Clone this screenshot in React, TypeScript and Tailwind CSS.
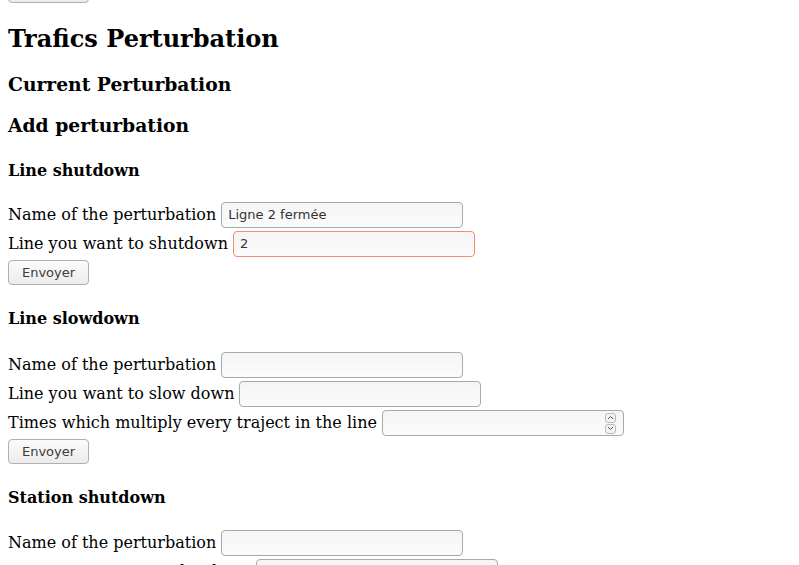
import React from "react";

const serif = { fontFamily: '"DejaVu Serif", serif' };

function Input({ value = "", focus = false, width = 242, spin = false }: { value?: string; focus?: boolean; width?: number; spin?: boolean }) {
  return (
    <div
      className={`relative h-[26px] shrink-0 rounded-[4px] border bg-gradient-to-b from-[#f5f5f5] to-[#fbfbfb] flex items-center px-[6px] text-[13px] text-[#333] ${focus ? "border-[#ef8f6f]" : "border-[#a9a9a9]"}`}
      style={{ width, fontFamily: '"DejaVu Sans", sans-serif' }}
    >
      <span>{value}</span>
      {spin && (
        <div className="absolute right-[7px] top-[2px] flex flex-col gap-[1px]">
          <div className="w-[11px] h-[10px] rounded-[3px] border border-[#bbb] bg-[#f3f3f3] flex items-center justify-center">
            <svg width="7" height="5" viewBox="0 0 7 5"><path d="M1 4 L3.5 1.5 L6 4" stroke="#555" strokeWidth="1" fill="none" /></svg>
          </div>
          <div className="w-[11px] h-[10px] rounded-[3px] border border-[#bbb] bg-[#f3f3f3] flex items-center justify-center">
            <svg width="7" height="5" viewBox="0 0 7 5"><path d="M1 1 L3.5 3.5 L6 1" stroke="#555" strokeWidth="1" fill="none" /></svg>
          </div>
        </div>
      )}
    </div>
  );
}

function Button({ className = "" }: { className?: string }) {
  return (
    <div
      className={`w-[81px] h-[25px] rounded-[4px] border border-[#b0b0b0] bg-gradient-to-b from-[#fbfbfb] to-[#ececec] flex items-center justify-center text-[13px] text-[#3c3c3c] ${className}`}
      style={{ fontFamily: '"DejaVu Sans", sans-serif' }}
    >
      Envoyer
    </div>
  );
}

function Row({ label, children }: { label: string; children: React.ReactNode }) {
  return (
    <div className="flex items-center h-[29px] gap-[5px] whitespace-nowrap">
      <span>{label}</span>
      {children}
    </div>
  );
}

export default function App() {
  return (
    <div className="w-[799px] h-[565px] overflow-hidden bg-white text-black text-[16px]" style={serif}>
      <div className="px-[8px]">
        <Button className="mt-[-22px]" />
        <h1 className="text-[24px] font-bold leading-[30px] mt-[21px]">Trafics Perturbation</h1>
        <h2 className="text-[18.72px] font-bold leading-[24px] mt-[18px]">Current Perturbation</h2>
        <h2 className="text-[18.72px] font-bold leading-[24px] mt-[17px]">Add perturbation</h2>
        <h3 className="text-[16px] font-bold leading-[20px] mt-[24px]">Line shutdown</h3>
        <div className="mt-[19px]">
          <Row label="Name of the perturbation"><Input value="Ligne 2 fermée" /></Row>
          <Row label="Line you want to shutdown"><Input value="2" focus /></Row>
          <Button className="mt-[2px]" />
        </div>
        <h3 className="text-[16px] font-bold leading-[20px] mt-[24px]">Line slowdown</h3>
        <div className="mt-[21px]">
          <Row label="Name of the perturbation"><Input /></Row>
          <Row label="Line you want to slow down"><Input /></Row>
          <Row label="Times which multiply every traject in the line"><Input spin /></Row>
          <Button className="mt-[2px]" />
        </div>
        <h3 className="text-[16px] font-bold leading-[20px] mt-[24px]">Station shutdown</h3>
        <div className="mt-[20px]">
          <Row label="Name of the perturbation"><Input /></Row>
          <Row label="Station you want to shutdown"><Input /></Row>
        </div>
      </div>
    </div>
  );
}
